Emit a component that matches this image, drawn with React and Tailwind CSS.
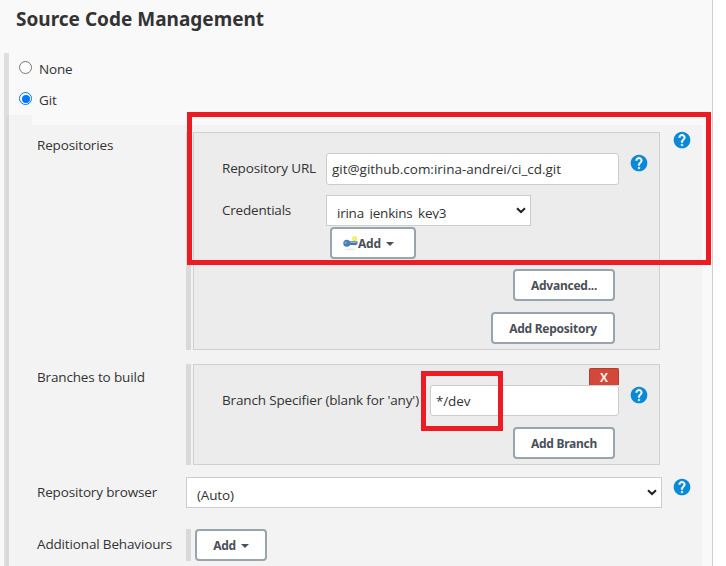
function Help({ className = '' }) {
  return (
    <svg viewBox="0 0 24 24" className={`size-[20px] shrink-0 ${className}`} aria-label="Help">
      <path
        fill="#0a8ad6"
        d="M12 2C6.48 2 2 6.48 2 12s4.48 10 10 10 10-4.48 10-10S17.52 2 12 2z"
      />
      <path
        fill="#fff"
        d="M13 19h-2v-2h2v2zm2.07-7.75-.9.92C13.45 12.9 13 13.5 13 15h-2v-.5c0-1.1.45-2.1 1.17-2.83l1.24-1.26c.37-.36.59-.86.59-1.41 0-1.1-.9-2-2-2s-2 .9-2 2H8c0-2.21 1.79-4 4-4s4 1.79 4 4c0 .88-.36 1.68-.93 2.25z"
        stroke="#fff"
        strokeWidth="0.5"
      />
    </svg>
  );
}

function Button({ className = '', children }) {
  return (
    <button
      className={`flex h-[32px] shrink-0 items-center justify-center rounded-[4px] border-2 border-[#98a5af] bg-white pt-px font-['Noto_Sans',sans-serif] text-[12px] leading-[20px] font-bold tracking-[-0.25px] whitespace-nowrap text-[#4b4f57] ${className}`}
    >
      {children}
    </button>
  );
}

function Caret({ className = '' }) {
  return (
    <svg viewBox="0 0 8 4" className={`h-[4px] w-[8px] ${className}`}>
      <path d="M0 0h8L4 4z" fill="#4b4f57" />
    </svg>
  );
}

function Chevron({ className = '' }) {
  return (
    <svg viewBox="0 0 10 7" className={`h-[7px] w-[10px] shrink-0 ${className}`}>
      <path d="M1 1.2 5 5 9 1.2" fill="none" stroke="#222" strokeWidth="2" />
    </svg>
  );
}

function KeyIcon() {
  return (
    <svg viewBox="0 0 15 15" className="h-[15px] w-[15px] shrink-0">
      <ellipse cx="7.5" cy="13.4" rx="5" ry="0.8" fill="#e8e8e8" />
      <circle cx="11.6" cy="2.8" r="1.7" fill="#fffbb0" stroke="#f5ea3c" strokeWidth="1.5" />
      <path d="M6 5.2h8.5v3h-1.2v1h-2v-.2H6z" fill="#4676b0" />
      <path d="M6 6h7.5v1H6z" fill="#8fb4dc" />
      <circle cx="3.8" cy="7.2" r="3.5" fill="#4a7cb8" />
      <circle cx="2.7" cy="6.8" r="1.2" fill="#7ba3d2" />
    </svg>
  );
}

function Radio({ checked }) {
  return (
    <span
      className={`flex size-[13px] shrink-0 items-center justify-center rounded-full border bg-white ${
        checked ? 'border-[#0075ff]' : 'border-[#767676]'
      }`}
    >
      {checked && <span className="size-[8px] rounded-full bg-[#0075ff]" />}
    </span>
  );
}

export default function App() {
  return (
    <div className="relative h-[566px] w-[726px] overflow-hidden bg-white font-['Open_Sans',sans-serif] text-[13.5px] leading-[20px] tracking-[-0.15px] whitespace-nowrap text-[#333]">
      <div className="flex h-full w-[713px] flex-col border-r border-[#ccc] bg-[#f9f9f9]">
        <h2 className="h-[53px] pt-[7px] pl-[16px] font-['Noto_Sans',sans-serif] text-[19px] leading-[24px] font-bold tracking-normal">
          Source Code Management
        </h2>
        <div className="flex flex-1 pl-[4px]">
          <div className="flex w-[5px] flex-col bg-[#dfdfdf]">
            <div className="mt-[62px] ml-[2px] flex-1 bg-[#d9d9d9]" />
          </div>
          <div className="flex w-[693px] flex-col">
            <div className="flex h-[31px] pt-[6px] pl-[10px]">
              <div className="pt-[2px]"><Radio /></div>
              <span className="ml-[7px]">None</span>
            </div>
            <div className="flex h-[31px] pt-[6px] pl-[10px]">
              <div className="pt-[2px]"><Radio checked /></div>
              <span className="ml-[7px]">Git</span>
            </div>
            <div className="h-[10px] w-[23px] bg-[#f3f3f3]" />
            <div className="flex-1 bg-[#f3f3f3] pt-[7px] pl-[28px]">
              <div className="flex h-[232px]">
                <div className="w-[149px] pt-[3px]">Repositories</div>
                <div className="h-[218px] w-[5px] bg-[#d9d9d9]" />
                <div className="ml-[2px] flex h-[218px] w-[467px] flex-col border border-[#d0d0d0] bg-[#ececec] pt-[20px] pl-[28px]">
                  <div className="flex h-[42px]">
                    <div className="w-[104px] pt-[5px]">Repository URL</div>
                    <div className="h-[32px] w-[293px] rounded-[3px] border border-[#ccc] bg-white pt-[5px] pl-[5px] tracking-[-0.02px]">
                      git@github.com:irina-andrei/ci_cd.git
                    </div>
                    <Help className="ml-[10px]" />
                  </div>
                  <div className="flex h-[32px]">
                    <div className="w-[104px] pt-[5px] tracking-[-0.2px]">Credentials</div>
                    <div className="flex h-[31px] w-[205px] justify-between border border-[#ccc] bg-white pr-[4px] pl-[10px]">
                      <div className="mt-[7px] h-[16px] overflow-hidden tracking-[-0.24px]">irina_jenkins_key3</div>
                      <Chevron className="mt-[11px]" />
                    </div>
                  </div>
                  <Button className="ml-[108px] w-[86px] !justify-start pl-[11px]">
                    <KeyIcon />
                    Add
                    <Caret className="ml-[5px]" />
                  </Button>
                  <div className="flex w-[393px] flex-col items-end gap-[11px] pt-[10px]">
                    <Button className="w-[102px]">Advanced...</Button>
                    <Button className="w-[124px]">Add Repository</Button>
                  </div>
                </div>
                <Help className="-mt-[2px] ml-[12px]" />
              </div>
              <div className="flex h-[113px]">
                <div className="w-[149px] pt-[3px]">Branches to build</div>
                <div className="h-[101px] w-[5px] bg-[#d9d9d9]" />
                <div className="ml-[2px] flex h-[101px] w-[467px] flex-col border border-[#d0d0d0] bg-[#ececec] pt-[3px] pl-[28px]">
                  <div className="ml-[367px] h-[17px] w-[30px] rounded-t-[2px] border border-b-0 border-[#b93a2e] bg-[#d24939] text-center text-[12px] leading-[17px] font-bold text-[#eee]">
                    X
                  </div>
                  <div className="flex h-[42px]">
                    <div className="w-[208px] pt-[5px]">Branch Specifier (blank for 'any')</div>
                    <div className="h-[31px] w-[189px] rounded-[3px] border border-[#ccc] bg-white pt-[5px] pl-[5px]">
                      */dev
                    </div>
                    <Help className="ml-[10px]" />
                  </div>
                  <Button className="ml-[291px] w-[102px]">Add Branch</Button>
                </div>
              </div>
              <div className="flex h-[52px]">
                <div className="w-[149px] pt-[5px]">Repository browser</div>
                <div className="flex h-[31px] w-[476px] justify-between border border-[#ccc] bg-white pr-[4px] pl-[10px]">
                  <div className="pt-[7px]">(Auto)</div>
                  <Chevron className="mt-[11px]" />
                </div>
                <Help className="ml-[10px]" />
              </div>
              <div className="flex h-[32px]">
                <div className="w-[149px] pt-[5px]">Additional Behaviours</div>
                <div className="w-[5px] bg-[#d9d9d9]" />
                <Button className="ml-[4px] w-[72px]">
                  Add
                  <Caret className="ml-[5px]" />
                </Button>
              </div>
            </div>
          </div>
        </div>
      </div>
      <div className="absolute top-[112px] left-[187px] h-[153px] w-[524px] border-5 border-[#ed1c24]" />
      <div className="absolute top-[371px] left-[421px] h-[60px] w-[82px] border-5 border-[#ed1c24]" />
    </div>
  );
}
